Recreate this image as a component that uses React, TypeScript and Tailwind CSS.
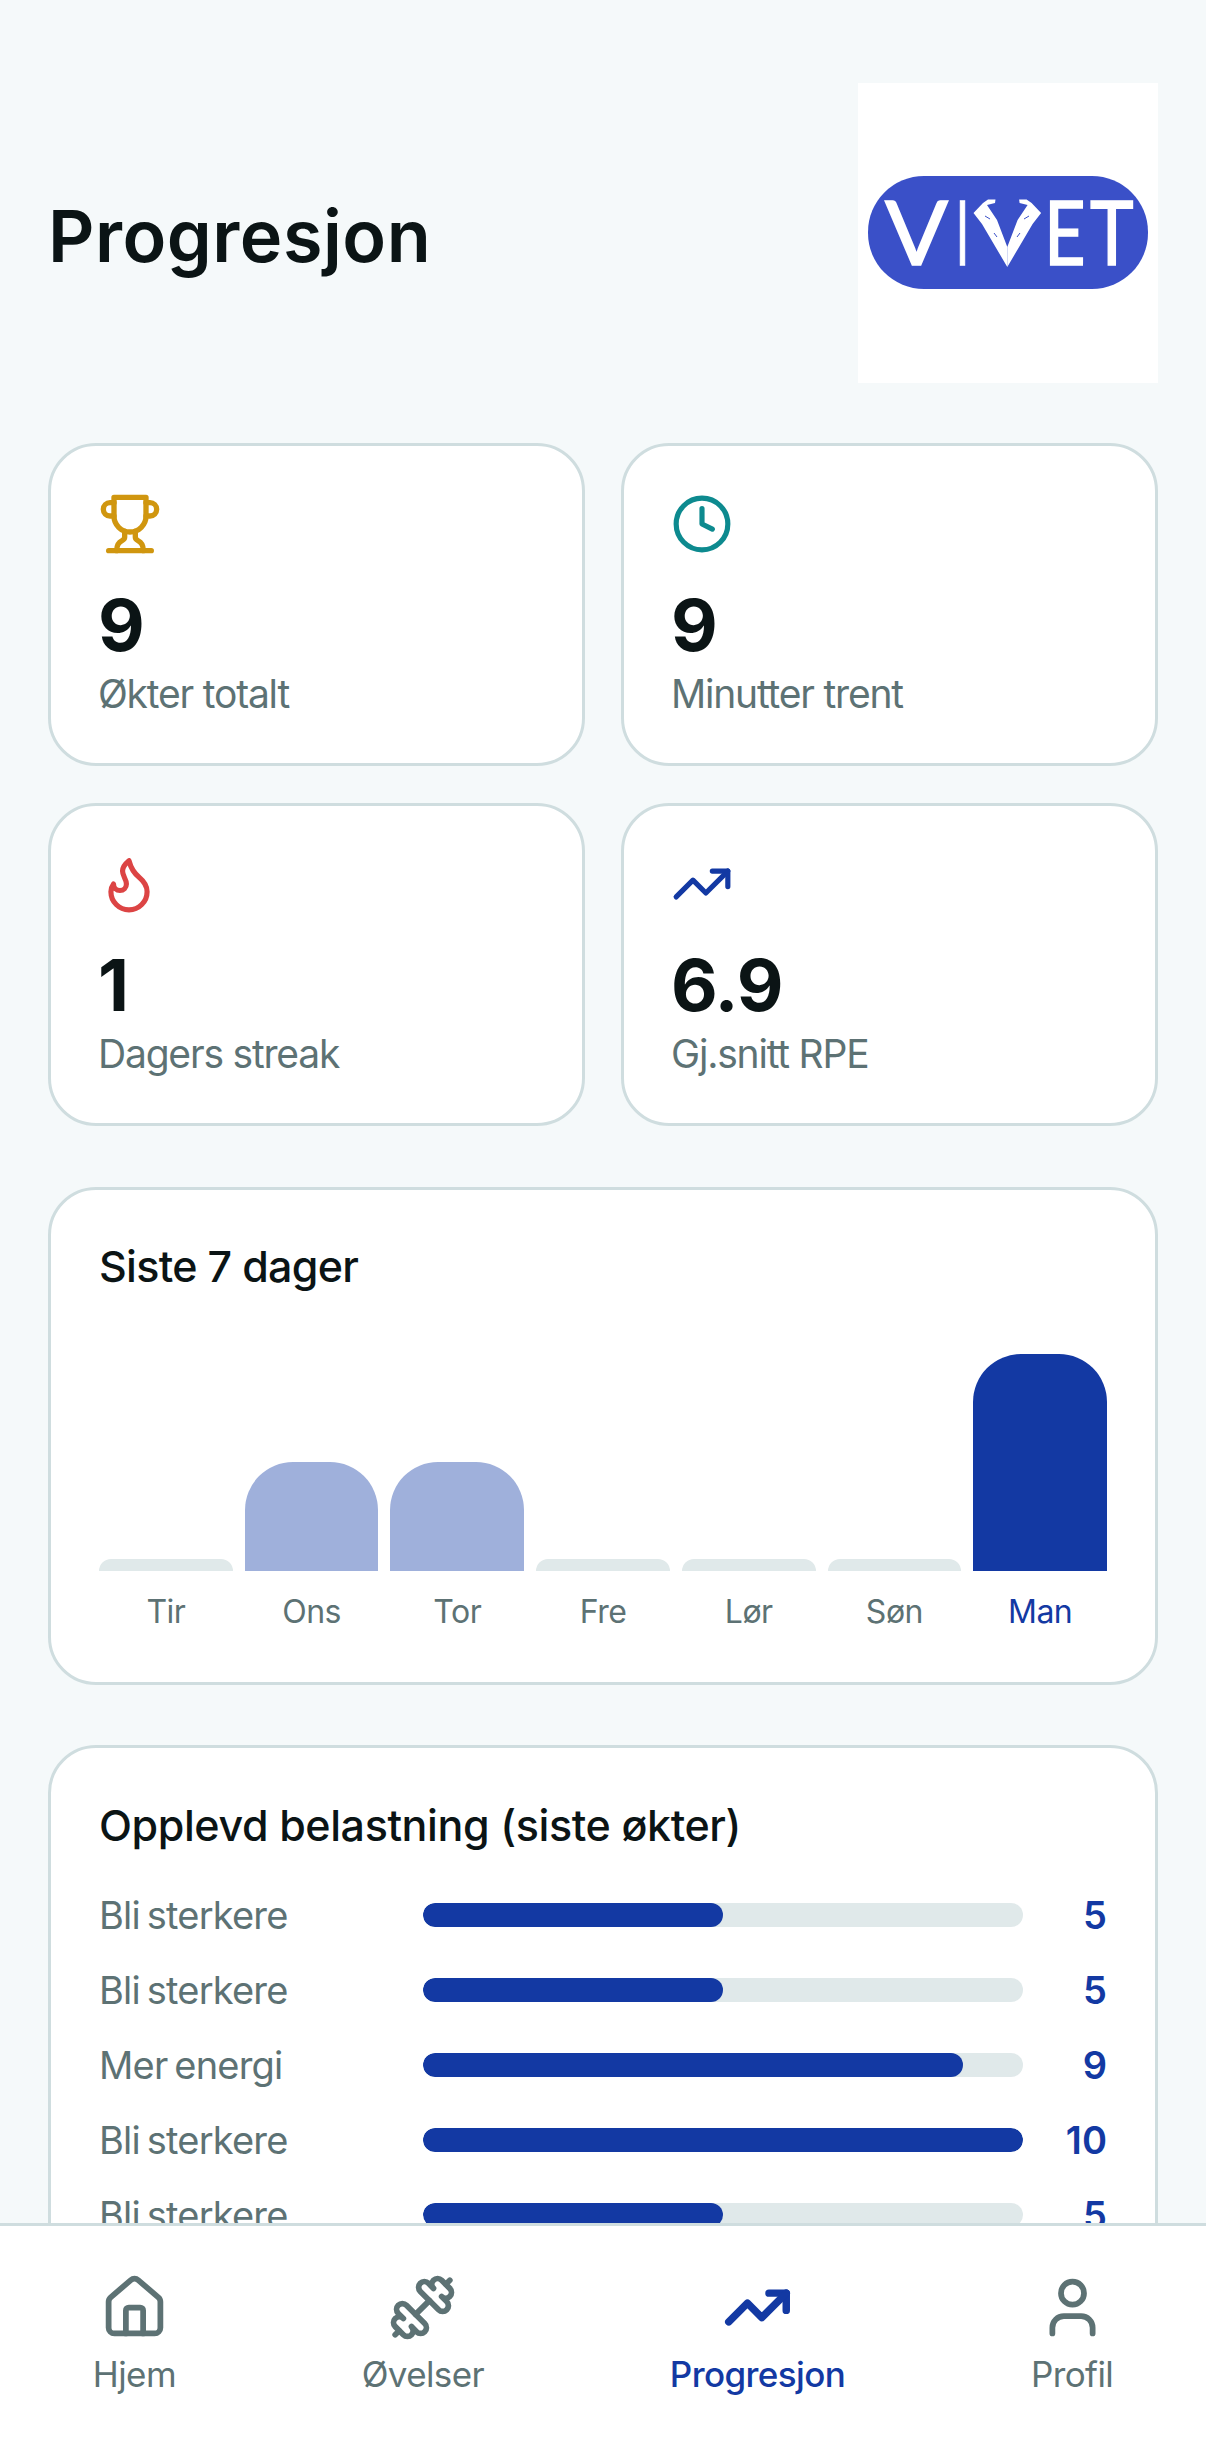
import { Clock, Dumbbell, Flame, House, TrendingUp, User } from "lucide-react";
import type { ReactNode } from "react";

const sevenDays = [
  { label: "Tir", barClass: "h-3 rounded-t-xl bg-[#e0e9ea]", textClass: "text-[#5d7274]" },
  { label: "Ons", barClass: "h-[109px] rounded-t-[48px] bg-[#9fb0db]", textClass: "text-[#5d7274]" },
  { label: "Tor", barClass: "h-[109px] rounded-t-[48px] bg-[#9fb0db]", textClass: "text-[#5d7274]" },
  { label: "Fre", barClass: "h-3 rounded-t-xl bg-[#e0e9ea]", textClass: "text-[#5d7274]" },
  { label: "Lør", barClass: "h-3 rounded-t-xl bg-[#e0e9ea]", textClass: "text-[#5d7274]" },
  { label: "Søn", barClass: "h-3 rounded-t-xl bg-[#e0e9ea]", textClass: "text-[#5d7274]" },
  { label: "Man", barClass: "h-[217px] rounded-t-[48px] bg-[#1339a3]", textClass: "text-[#1339a3]" },
];

const loads = [
  { name: "Bli sterkere", value: 5 },
  { name: "Bli sterkere", value: 5 },
  { name: "Mer energi", value: 9 },
  { name: "Bli sterkere", value: 10 },
  { name: "Bli sterkere", value: 5 },
];

const TrophyIcon = () => (
  <svg
    viewBox="0 0 24 24"
    fill="none"
    stroke="currentColor"
    strokeWidth={2}
    strokeLinecap="round"
    strokeLinejoin="round"
    className="size-[64px] text-[#d0960f]"
  >
    <path d="M6 9H4.5a2.5 2.5 0 0 1 0-5H6" />
    <path d="M18 9h1.5a2.5 2.5 0 0 0 0-5H18" />
    <path d="M4 22h16" />
    <path d="M10 14.66V17c0 .55-.47.98-.97 1.21C7.85 18.75 7 20.24 7 22" />
    <path d="M14 14.66V17c0 .55.47.98.97 1.21C16.15 18.75 17 20.24 17 22" />
    <path d="M18 2H6v7a6 6 0 0 0 12 0V2Z" />
  </svg>
);

const Logo = () => (
  <svg viewBox="0 0 300 300" className="size-[300px] bg-white">
    <rect x="10" y="93" width="280" height="113" rx="56" fill="#3a50c8" />
    <g fill="#fff" stroke="#fff" strokeWidth="1.6" fontFamily="Lato, sans-serif" fontSize="90">
      <text x="27" y="182" textLength="63" lengthAdjust="spacingAndGlyphs">V</text>
      <text x="98" y="182" textLength="13" lengthAdjust="spacingAndGlyphs">I</text>
      <text transform="translate(186 182) scale(0.8 1)">E</text>
      <text transform="translate(232 182) scale(0.82 1)">T</text>
    </g>
    {/* flexing arms that make up the middle V */}
    <path
      d="M149.3 184L124 141L115.5 130L125 120L130 116.5L137.5 116.5L137 120L129 122L139 137L149.3 164Z"
      fill="#fff"
    />
    <path
      d="M149.3 184L174.6 141L183.1 130L173.6 120L168.6 116.5L161.1 116.5L161.6 120L169.6 122L159.6 137L149.3 164Z"
      fill="#fff"
    />
    <path d="M127 133l5 3M136 150l3 4M171 133l-5 3M162 150l-3 4" stroke="#3a50c8" strokeWidth="1" fill="none" />
  </svg>
);

const StatCard = ({ icon, value, label }: { icon: ReactNode; value: string; label: string }) => {
  return (
    <div className="h-[323px] rounded-[48px] border-[3px] border-[#cfdddf] bg-white px-[47px] pt-[45px]">
      <div className="flex h-[66px] items-center">{icon}</div>
      <div className="mt-[23px] text-[72px] leading-[90px] font-bold tracking-[-1px] text-[#0b1415]">{value}</div>
      <div className="-mt-[2px] text-[39px] leading-[52px] tracking-[-1.2px] text-[#5d7274]">{label}</div>
    </div>
  );
};

const NavItem = ({ icon, label, active }: { icon: ReactNode; label: string; active?: boolean }) => {
  return (
    <div className={`flex flex-col items-center ${active ? "text-[#1339a3]" : "text-[#5d7274]"}`}>
      <div className="flex size-[72px] items-center justify-center">{icon}</div>
      <div className={`mt-[7px] text-[35px] leading-[48px] tracking-[-0.6px] ${active ? "font-medium" : ""}`}>
        {label}
      </div>
    </div>
  );
};

export default function App() {
  return (
    <div
      className="flex h-[2447px] w-[1206px] flex-col overflow-hidden bg-[#f5f9fa]"
      style={{ fontFamily: "Inter, sans-serif" }}
    >
      <main className="min-h-0 flex-1 overflow-hidden px-12 pt-[83px]">
        <header className="flex items-center justify-between">
          <h1 className="pt-[5px] text-[72px] font-semibold tracking-[0.5px] text-[#0b1415]">Progresjon</h1>
          <Logo />
        </header>

        <section className="mt-[60px] grid grid-cols-2 gap-x-[36px] gap-y-[37px]">
          <StatCard icon={<TrophyIcon />} value="9" label="Økter totalt" />
          <StatCard icon={<Clock size={62} className="text-[#0d8a8f]" />} value="9" label="Minutter trent" />
          <StatCard icon={<Flame size={62} className="text-[#dc4444]" />} value="1" label="Dagers streak" />
          <StatCard icon={<TrendingUp size={62} className="text-[#1339a3]" />} value="6.9" label="Gj.snitt RPE" />
        </section>

        <section className="mt-[61px] h-[498px] rounded-[48px] border-[3px] border-[#cfdddf] bg-white px-12 pt-[49px]">
          <h2 className="text-[43px] leading-[54px] font-medium tracking-[-0.7px] text-[#0b1415]">Siste 7 dager</h2>
          <div className="mt-[61px] grid h-[217px] grid-cols-7 items-end gap-[12px]">
            {sevenDays.map((day) => (
              <div key={day.label} className={day.barClass} />
            ))}
          </div>
          <div className="mt-[19px] grid grid-cols-7 gap-[12px]">
            {sevenDays.map((day) => (
              <div key={day.label} className={`text-center text-[32px] leading-[44px] tracking-[-0.5px] ${day.textClass}`}>
                {day.label}
              </div>
            ))}
          </div>
        </section>

        <section className="mt-[60px] rounded-[48px] border-[3px] border-[#cfdddf] bg-white px-12 pt-[50px] pb-12">
          <h2 className="text-[43px] leading-[54px] font-medium tracking-[-0.4px] text-[#0b1415]">
            Opplevd belastning (siste økter)
          </h2>
          <div className="mt-[36px] flex flex-col gap-[21px]">
            {loads.map((load, index) => (
              <div key={index} className="flex h-[54px] items-center">
                <div className="w-[324px] shrink-0 text-[38px] tracking-[-0.8px] text-[#5d7274] [word-spacing:-3px]">
                  {load.name}
                </div>
                <div className="h-6 w-[600px] overflow-hidden rounded-full bg-[#e0e9ea]">
                  <div className="h-full rounded-full bg-[#1339a3]" style={{ width: `${load.value * 10}%` }} />
                </div>
                <div className="flex-1 text-right text-[38px] font-semibold text-[#1339a3]">{load.value}</div>
              </div>
            ))}
          </div>
        </section>
      </main>

      <nav className="flex h-[224px] shrink-0 items-start justify-around border-t-[3px] border-[#cfdddf] bg-white pt-[45px]">
        <NavItem icon={<House size={69} />} label="Hjem" />
        <NavItem icon={<Dumbbell size={69} />} label="Øvelser" />
        <NavItem icon={<TrendingUp size={69} strokeWidth={2.6} />} label="Progresjon" active />
        <NavItem icon={<User size={69} />} label="Profil" />
      </nav>
    </div>
  );
}
